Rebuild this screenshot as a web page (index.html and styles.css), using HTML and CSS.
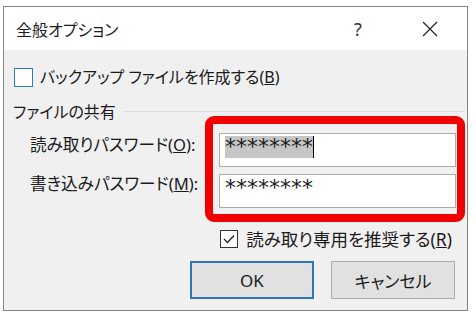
FILE: index.html
```html
<!DOCTYPE html>
<html lang="ja">
<head>
    <meta charset="UTF-8">
    <meta name="viewport" content="width=device-width, initial-scale=1.0">
    <title>全般オプション</title>
    <link rel="stylesheet" href="styles.css">
</head>
<body>

    <div class="dialog">
        <div class="titlebar">
            <span class="title">全般オプション</span>
            <span class="help">?</span>
            <svg class="close" width="16" height="16" viewBox="0 0 16 16">
                <path d="M1 1 L15 15 M15 1 L1 15" stroke="#222" stroke-width="1.2" fill="none"/>
            </svg>
        </div>

        <div class="content">
            <div class="check backup">
                <span class="box"></span>
                <span>バックアップ ファイルを作成する(<u>B</u>)</span>
            </div>

            <div class="group-head">
                <span>ファイルの共有</span>
                <span class="rule"></span>
            </div>

            <div class="share">
                <div class="labels">
                    <div class="label">読み取りパスワード(<u>O</u>):</div>
                    <div class="label">書き込みパスワード(<u>M</u>):</div>
                </div>
                <div class="mark">
                    <div class="field"><span class="sel">********</span><span class="caret"></span></div>
                    <div class="field"><span class="stars">********</span></div>
                </div>
            </div>

            <div class="check readonly">
                <span class="box checked">
                    <svg width="14" height="14" viewBox="0 0 14 14">
                        <path d="M2 7 L5.5 10.5 L12 3.5" stroke="#222" stroke-width="1.3" fill="none"/>
                    </svg>
                </span>
                <span>読み取り専用を推奨する(<u>R</u>)</span>
            </div>

            <div class="buttons">
                <button class="btn default">OK</button>
                <button class="btn">キャンセル</button>
            </div>
        </div>
    </div>

</body>
</html>
```

FILE: styles.css
```css
body {
    margin: 0;
    padding: 6px 0 0 3px;
    background: #ffffff;
    font-family: "Noto Sans", "Noto Sans CJK JP", sans-serif;
    font-feature-settings: "palt";
    color: #1a1a1a;
}
.dialog {
    width: 465px;
    height: 305px;
    box-sizing: border-box;
    border: 1px solid #858585;
    background: #f0f0f0;
}
.titlebar {
    height: 43px;
    background: #ffffff;
    display: flex;
    align-items: center;
}
.title {
    font-size: 16px;
    padding-left: 12px;
    flex: 1;
}
.help {
    font-size: 18px;
    color: #333;
    width: 20px;
    text-align: center;
    margin-right: 54px;
}
.close {
    margin-right: 29px;
}

.content {
    display: flex;
    flex-direction: column;
}
.check {
    display: flex;
    align-items: center;
    font-size: 16px;
    line-height: 20px;
}
.box {
    width: 19px;
    height: 19px;
    box-sizing: border-box;
    background: #ffffff;
    display: flex;
    align-items: center;
    justify-content: center;
}
.backup {
    margin-top: 17px;
    padding-left: 10px;
    gap: 7px;
}
.backup .box {
    border: 1px solid #2f7db3;
}
.readonly {
    margin-top: 7px;
    align-self: flex-end;
    padding-right: 15px;
    gap: 8px;
    font-size: 17.5px;
}
.readonly .box {
    width: 18px;
    height: 18px;
    border: 1px solid #333;
}

.group-head {
    display: flex;
    align-items: center;
    margin-top: 14px;
    padding-left: 9px;
    height: 20px;
    font-size: 16px;
}
.rule {
    flex: 1;
    height: 1px;
    background: #dcdcdc;
    margin: 0 2px 0 7px;
}

.share {
    display: flex;
    margin-top: -5px;
}
.labels {
    width: 201px;
    padding: 17px 0 0 26px;
    box-sizing: border-box;
    display: flex;
    flex-direction: column;
    gap: 15px;
}
.label {
    font-size: 16.6px;
    line-height: 24px;
    white-space: nowrap;
}
.mark {
    width: 260px;
    height: 106px;
    box-sizing: border-box;
    border: 8px solid #f00000;
    border-radius: 9px;
    padding: 9px 1px 6px 6px;
    display: flex;
    flex-direction: column;
    gap: 7px;
}
.field {
    height: 34px;
    box-sizing: border-box;
    border: 1px solid #acacac;
    background: #ffffff;
    padding: 2px 0 0 5px;
    display: flex;
    align-items: flex-start;
    font-family: "DejaVu Sans", sans-serif;
    font-size: 22px;
    line-height: 22px;
}
.sel {
    background: #c6c6c6;
}
.caret {
    width: 1px;
    height: 22px;
    background: #000;
}

.buttons {
    display: flex;
    justify-content: flex-end;
    gap: 17px;
    margin-top: 12px;
    padding-right: 12px;
}
.btn {
    width: 124px;
    height: 38px;
    background: #e1e1e1;
    border: 1px solid #adadad;
    font-family: "Noto Sans", "Noto Sans CJK JP", sans-serif;
    font-feature-settings: "palt";
    font-size: 17px;
    color: #1a1a1a;
    padding: 0;
}
.btn.default {
    border: 2px solid #2f74b5;
}
```
